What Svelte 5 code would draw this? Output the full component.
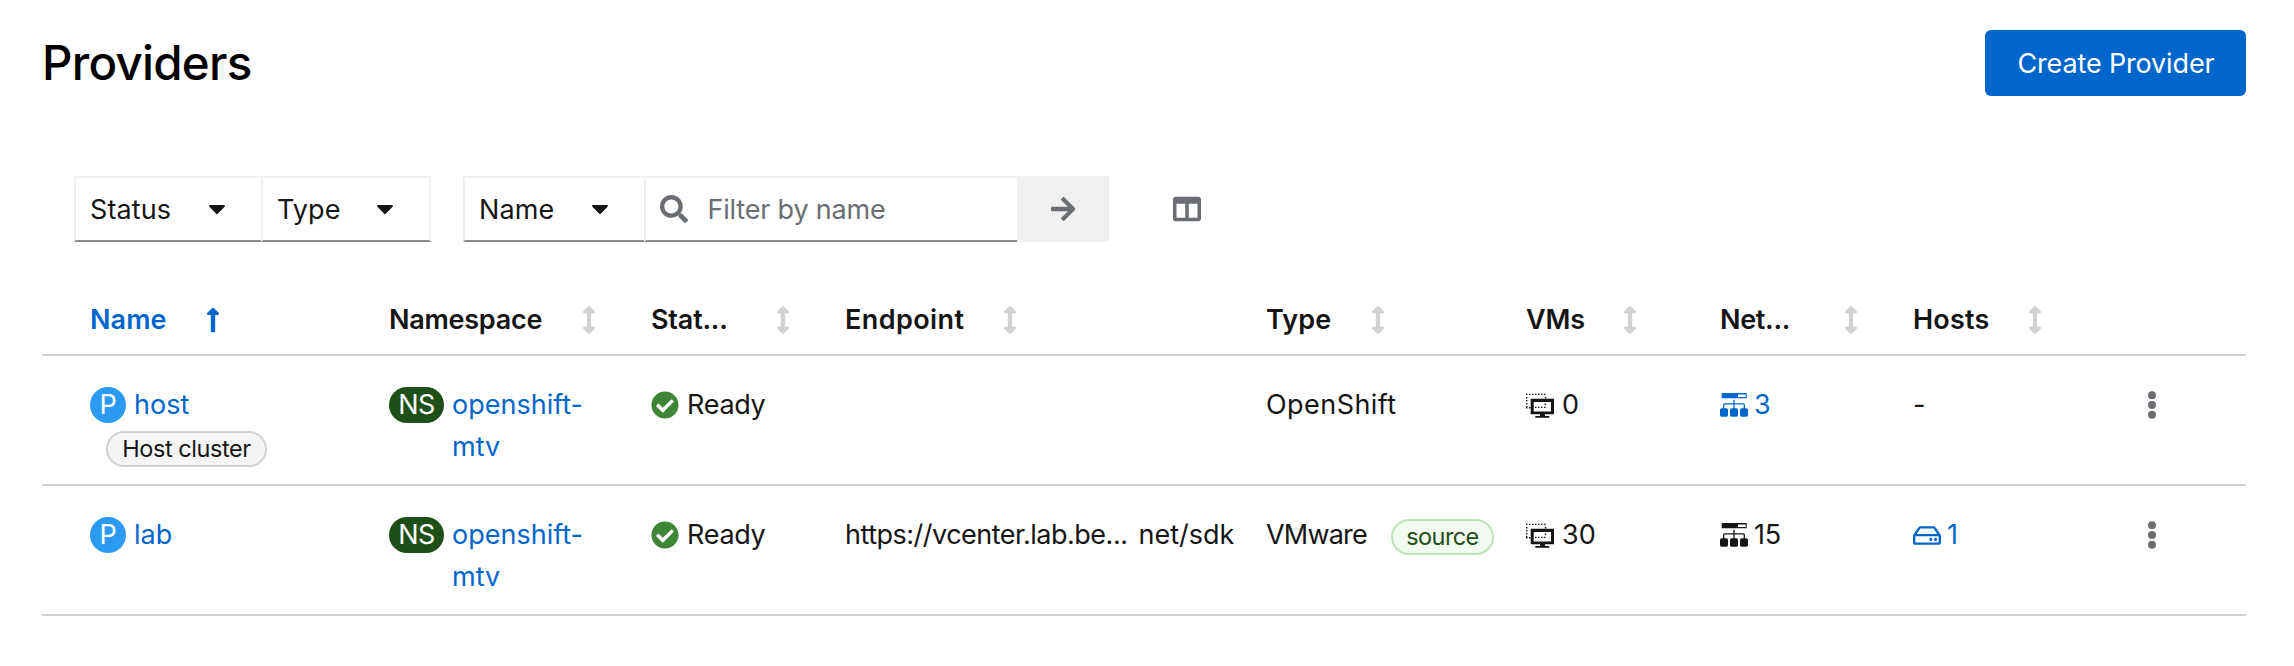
<script>
  const columns = [
    { label: 'Name', width: 116, spacing: 0.1, sorted: true },
    { label: 'Namespace', width: 193, spacing: -0.25 },
    { label: 'Stat...', width: 125, spacing: -0.2 },
    { label: 'Endpoint', width: 159, spacing: 0.4, nudge: 1 },
    { label: 'Type', width: 105, spacing: 0.1 },
    { label: 'VMs', width: 97, spacing: -0.2 },
    { label: 'Net...', width: 125, spacing: -0.3, nudge: 1 },
    { label: 'Hosts', width: 116, spacing: 0.2, nudge: 1 }
  ];

  const providers = [
    { name: 'host', tag: 'Host cluster', type: 'OpenShift', vms: '0', networks: '3', networksLink: true },
    {
      name: 'lab',
      endpoint: ['https://vcenter.lab.be...', 'net/sdk'],
      type: 'VMware',
      source: true,
      vms: '30',
      networks: '15',
      hosts: '1'
    }
  ];
</script>

{#snippet caret()}
  <svg class="caret" viewBox="11 192 298 169" width="16" height="9"><path d="M31.3 192h257.3c17.8 0 26.7 21.5 14.1 34.1L174.1 354.8c-7.8 7.8-20.5 7.8-28.3 0L17.2 226.1C4.6 213.5 13.5 192 31.3 192z" /></svg>
{/snippet}

{#snippet sortIcon(sorted)}
  <svg class="sort" viewBox="0 0 256 512" width="14" height="28">
    {#if sorted}
      <path d="M88 166.059V468c0 6.627 5.373 12 12 12h56c6.627 0 12-5.373 12-12V166.059h46.059c21.382 0 32.09-25.851 16.971-40.971l-86.059-86.059c-9.373-9.373-24.569-9.373-33.941 0l-86.059 86.059c-15.119 15.119-4.411 40.971 16.971 40.971H88z" />
    {:else}
      <path d="M214.059 377.941H168V134.059h46.059c21.382 0 32.09-25.851 16.971-40.971L144.971 7.029c-9.373-9.373-24.568-9.373-33.941 0L24.971 93.088c-15.119 15.119-4.411 40.971 16.971 40.971H88v243.882H41.941c-21.382 0-32.09 25.851-16.971 40.971l86.059 86.059c9.373 9.373 24.568 9.373 33.941 0l86.059-86.059c15.12-15.119 4.412-40.971-16.97-40.971z" />
    {/if}
  </svg>
{/snippet}

{#snippet vmIcon()}
  <svg viewBox="0 0 28 28" width="28" height="28">
    <g fill="none" stroke="currentColor" stroke-width="1.4">
      <path stroke-dasharray="1.5 1.5" d="M0 3.4H20.6M.7 6V17.4M19.6 6V7.6M0 16.8H4.6M9 16.4H20M19.4 12.6V15" />
    </g>
    <path fill-rule="evenodd" d="M4.7 7.7H28V23.3H19V25H23.3V26.7H9.3V25H14V23.3H4.7zM7.7 11V20.6H25V11z" />
  </svg>
{/snippet}

{#snippet networkIcon()}
  <svg viewBox="0 0 28 28" width="28" height="28">
    <path fill-rule="evenodd" d="M1.7 2H26.7V7.3H1.7zM18 3.6V6H25.7V3.6z" />
    <path fill="none" stroke="currentColor" stroke-width="1.3" d="M14 8.8V18M3.7 18V13.8Q3.7 12.9 4.6 12.9H23.4Q24.3 12.9 24.3 13.8V18" />
    <rect x="0" y="17.3" width="8" height="8.4" rx="1.6" />
    <rect x="10" y="17.3" width="8" height="8.4" rx="1.6" />
    <rect x="20" y="17.3" width="8" height="8.4" rx="1.6" />
  </svg>
{/snippet}

<main>
  <header>
    <h1>Providers</h1>
    <button class="primary">Create Provider</button>
  </header>

  <section class="toolbar">
    <button class="toggle status"><span>Status</span>{@render caret()}</button>
    <button class="toggle type"><span>Type</span>{@render caret()}</button>
    <button class="toggle attribute"><span>Name</span>{@render caret()}</button>
    <div class="search">
      <svg viewBox="0 0 512 512" width="28" height="28"><path d="M505 442.7L405.3 343c-4.5-4.5-10.6-7-17-7H372c27.6-35.3 44-79.7 44-128C416 93.1 322.9 0 208 0S0 93.1 0 208s93.1 208 208 208c48.3 0 92.7-16.4 128-44v16.3c0 6.4 2.5 12.5 7 17l99.7 99.7c9.4 9.4 24.6 9.4 33.9 0l28.3-28.3c9.4-9.4 9.4-24.6.1-34zM208 336c-70.7 0-128-57.2-128-128 0-70.7 57.2-128 128-128 70.7 0 128 57.2 128 128 0 70.7-57.2 128-128 128z" /></svg>
      <span>Filter by name</span>
    </div>
    <button class="submit" aria-label="Search">
      <svg viewBox="0 0 448 512" width="24.5" height="28"><path d="M190.5 66.9l22.2-22.2c9.4-9.4 24.6-9.4 33.9 0L441 239c9.4 9.4 9.4 24.6 0 33.9L246.6 467.3c-9.4 9.4-24.6 9.4-33.9 0l-22.2-22.2c-9.5-9.5-9.3-25 .4-34.3L311.4 296H24c-13.3 0-24-10.7-24-24v-32c0-13.3 10.7-24 24-24h287.4L190.9 101.2c-9.8-9.3-10-24.8-.4-34.3z" /></svg>
    </button>
    <button class="manage" aria-label="Manage columns">
      <svg viewBox="0 0 512 512" width="28" height="28"><path d="M464 32H48C21.49 32 0 53.49 0 80v352c0 26.51 21.49 48 48 48h416c26.51 0 48-21.49 48-48V80c0-26.51-21.49-48-48-48zM224 416H64V160h160v256zm224 0H288V160h160v256z" /></svg>
    </button>
  </section>

  <section class="table">
    <div class="row head">
      {#each columns as column}
        <div class="th" class:sorted={column.sorted}>
          <span style="width: {column.width}px; letter-spacing: {column.spacing}px; text-indent: {column.nudge ?? 0}px">{column.label}</span>
          {@render sortIcon(column.sorted)}
        </div>
      {/each}
    </div>

    {#each providers as provider}
      <div class="row body">
        <div>
          <div class="line resource">
            <span class="badge provider">P</span><span class="link">{provider.name}</span>
          </div>
          {#if provider.tag}<span class="label cluster">{provider.tag}</span>{/if}
        </div>
        <div class="resource namespace">
          <span class="badge ns">NS</span>
          <span class="link"><span class="first">openshift-</span><br />mtv</span>
        </div>
        <div class="line ready">
          <svg viewBox="0 0 512 512" width="28" height="28"><path d="M504 256c0 136.967-111.033 248-248 248S8 392.967 8 256 119.033 8 256 8s248 111.033 248 248zM227.314 387.314l184-184c6.248-6.248 6.248-16.379 0-22.627l-22.627-22.627c-6.248-6.249-16.379-6.249-22.628 0L216 308.118l-70.059-70.059c-6.248-6.248-16.379-6.248-22.628 0l-22.627 22.627c-6.248 6.248-6.248 16.379 0 22.627l104 104c6.249 6.249 16.379 6.249 22.628.001z" /></svg>
          <span>Ready</span>
        </div>
        <div class="line endpoint">
          {#if provider.endpoint}
            <span class="start">{provider.endpoint[0]}</span><span>{provider.endpoint[1]}</span>
          {/if}
        </div>
        <div class="line kind" class:wide={!provider.source}>
          <span>{provider.type}</span>
          {#if provider.source}<span class="label source">source</span>{/if}
        </div>
        <div class="line count">{@render vmIcon()}<span>{provider.vms}</span></div>
        <div class="line count network" class:link={provider.networksLink}>
          {@render networkIcon()}<span>{provider.networks}</span>
        </div>
        <div class="line count">
          {#if provider.hosts}
            <span class="hosts link">
              <svg viewBox="0 0 576 512" width="28" height="25"><path d="M567.403 235.642L462.323 84.589A48 48 0 0 0 422.919 64H153.081a48 48 0 0 0-39.404 20.589L8.597 235.642A48.001 48.001 0 0 0 0 263.054V400c0 26.51 21.49 48 48 48h480c26.51 0 48-21.49 48-48V263.054c0-9.801-3-19.366-8.597-27.412zM153.081 112h269.838l77.913 112H75.168l77.913-112zM528 400H48V272h480v128zm-32-64c0 17.673-14.327 32-32 32s-32-14.327-32-32 14.327-32 32-32 32 14.327 32 32zm-96 0c0 17.673-14.327 32-32 32s-32-14.327-32-32 14.327-32 32-32 32 14.327 32 32z" /></svg>
              <span>{provider.hosts}</span>
            </span>
          {:else}
            <span class="none">-</span>
          {/if}
        </div>
        <div class="line actions">
          <svg viewBox="0 0 8 28" width="8" height="28"><circle cx="4" cy="4.3" r="4" /><circle cx="4" cy="14" r="4" /><circle cx="4" cy="23.7" r="4" /></svg>
        </div>
      </div>
    {/each}
  </section>
</main>

<style>
  :global(body) {
    background: #fff;
  }
  main {
    box-sizing: border-box;
    height: 666px;
    padding: 30px 48px 0 42px;
    font: 400 27px/42px Inter, 'Liberation Sans', sans-serif;
    color: #151515;
    white-space: nowrap;
  }
  svg {
    display: block;
    flex: none;
    fill: currentColor;
  }
  button {
    box-sizing: border-box;
    margin: 0;
    padding: 0;
    border: 0;
    background: none;
    font: inherit;
    color: inherit;
  }
  header {
    display: flex;
    justify-content: space-between;
    align-items: center;
    height: 66px;
  }
  h1 {
    margin: 0;
    font-weight: 500;
    font-size: 47.5px;
    line-height: 66px;
    letter-spacing: -0.75px;
    color: #000;
  }
  .primary {
    width: 261px;
    height: 66px;
    padding: 1px 0 0 1px;
    border-radius: 6px;
    background: #06c;
    color: #fff;
    letter-spacing: -0.15px;
  }
  .toolbar {
    display: flex;
    height: 66px;
    margin-top: 80px;
    padding-left: 32px;
  }
  .toggle {
    display: flex;
    align-items: center;
    justify-content: space-between;
    border: 2px solid #f0f0f0;
    border-bottom-color: #8a8d90;
    padding-left: 14px;
  }
  .toggle span,
  .search span {
    padding-top: 1px;
  }
  .status {
    width: 187px;
    border-right: 0;
    padding-right: 36px;
    letter-spacing: 0.1px;
  }
  .type {
    width: 170px;
    padding-right: 36px;
    letter-spacing: 0.1px;
  }
  .attribute {
    width: 181px;
    margin-left: 32px;
    border-right: 0;
    padding-right: 36px;
    letter-spacing: 0.1px;
  }
  .caret {
    margin-top: 1px;
  }
  .search {
    box-sizing: border-box;
    display: flex;
    align-items: center;
    gap: 19.5px;
    width: 373px;
    border: 2px solid #f0f0f0;
    border-right: 0;
    border-bottom-color: #8a8d90;
    padding-left: 14px;
    color: #6a6e73;
    letter-spacing: -0.2px;
  }
  .submit {
    display: flex;
    align-items: center;
    justify-content: center;
    width: 92px;
    background: #f0f0f0;
    color: #6a6e73;
  }
  .manage {
    display: flex;
    align-items: center;
    margin-left: 64px;
    color: #6a6e73;
  }
  .table {
    margin-top: 43px;
  }
  .row {
    box-sizing: border-box;
    display: grid;
    grid-template-columns: 299px 262px 193px 422px 260px 193px 193px 236px auto;
    padding-left: 48px;
    border-bottom: 2px solid #d2d2d2;
  }
  .head {
    height: 71px;
    align-items: center;
    font-weight: 600;
  }
  .body {
    height: 130px;
    padding-top: 28px;
  }
  .th {
    display: flex;
    align-items: center;
  }
  .th span {
    flex: none;
  }
  .sort {
    color: #d2d2d2;
  }
  .sorted,
  .sorted .sort,
  .link {
    color: #06c;
  }
  .line {
    display: flex;
    align-items: center;
    height: 42px;
  }
  .resource {
    display: flex;
    gap: 8px;
  }
  .namespace {
    align-items: flex-start;
  }
  .badge {
    height: 36px;
    border-radius: 18px;
    line-height: 36px;
    text-align: center;
    color: #fff;
  }
  .provider {
    width: 36px;
    background: #2b9af3;
  }
  .ns {
    width: 55px;
    margin-top: 3px;
    background: #1e4f18;
    letter-spacing: -0.5px;
  }
  .label {
    box-sizing: border-box;
    display: block;
    height: 36px;
    border: 2px solid #d2d2d2;
    border-radius: 18px;
    background: #f5f5f5;
    font-size: 23.5px;
    line-height: 32px;
    text-align: center;
  }
  .cluster {
    width: 161px;
    margin: 5px 0 0 16px;
    letter-spacing: -0.45px;
  }
  .source {
    width: 103px;
    margin-top: 4px;
    border-color: #bde5b8;
    background: #f3faf2;
    color: #1e4f18;
    letter-spacing: -0.6px;
  }
  .ready {
    gap: 8px;
    letter-spacing: -0.3px;
  }
  .ready svg {
    color: #3e8635;
  }
  .endpoint {
    gap: 11px;
    padding-left: 1px;
  }
  .start {
    letter-spacing: -0.5px;
  }
  .kind {
    justify-content: space-between;
    padding-right: 32px;
    letter-spacing: -0.8px;
  }
  .wide {
    letter-spacing: 0.45px;
  }
  .count {
    gap: 8px;
  }
  .network {
    padding-left: 1px;
    gap: 6px;
    letter-spacing: -0.3px;
  }
  .hosts {
    display: flex;
    align-items: center;
    gap: 6px;
    padding-left: 1px;
  }
  .none {
    padding-left: 1px;
  }
  .actions {
    color: #6a6e73;
  }
</style>
